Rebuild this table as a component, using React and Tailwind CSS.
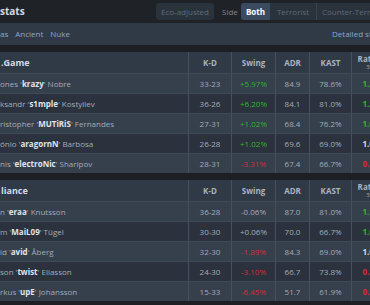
import React from "react";

const teams = [
  {
    name: ".Game",
    players: [
      { first: "ones", nick: "krazy", last: "Nobre", kd: "33-23", swing: "+5.97%", adr: "84.9", kast: "78.6%", rating: "1.24" },
      { first: "ksandr", nick: "s1mple", last: "Kostyliev", kd: "36-26", swing: "+6.20%", adr: "84.1", kast: "81.0%", rating: "1.22" },
      { first: "ristopher", nick: "MUTiRiS", last: "Fernandes", kd: "27-31", swing: "+1.02%", adr: "68.4", kast: "76.2%", rating: "1.05" },
      { first: "ónio", nick: "aragornN", last: "Barbosa", kd: "26-28", swing: "+1.02%", adr: "69.6", kast: "69.0%", rating: "1.00" },
      { first: "nis", nick: "electroNic", last: "Sharipov", kd: "28-31", swing: "-3.31%", adr: "67.4", kast: "66.7%", rating: "0.91" },
    ],
  },
  {
    name: "liance",
    players: [
      { first: "n", nick: "eraa", last: "Knutsson", kd: "36-28", swing: "-0.06%", adr: "87.0", kast: "81.0%", rating: "1.18" },
      { first: "m", nick: "MaiL09", last: "Tügel", kd: "30-30", swing: "+0.06%", adr: "70.0", kast: "66.7%", rating: "1.05" },
      { first: "id", nick: "avid", last: "Åberg", kd: "32-30", swing: "-1.89%", adr: "84.3", kast: "69.0%", rating: "1.00" },
      { first: "son", nick: "twist", last: "Eliasson", kd: "24-30", swing: "-3.10%", adr: "66.7", kast: "73.8%", rating: "0.89" },
      { first: "rkus", nick: "upE", last: "Johansson", kd: "15-33", swing: "-6.45%", adr: "51.7", kast: "61.9%", rating: "0.78" },
    ],
  },
];

const cols = "grid grid-cols-[188px_43px_44px_34px_42px_38px]";

function swingColor(s) {
  if (s === "-0.06%" || s === "+0.06%") return "text-[#a3acb7]";
  return s.startsWith("+") ? "text-[#2fb52a]" : "text-[#dc2b35]";
}

function ratingColor(r) {
  const v = parseFloat(r);
  if (v > 1.02) return "text-[#2fb52a]";
  if (v < 1) return "text-[#dc2b35]";
  return "text-[#d5dbe2]";
}

function Team({ team }) {
  return (
    <div className="w-[389px]">
      <div className={`${cols} h-[21px] bg-[#303946] text-[8px] font-bold text-[#a9b2bd]`}>
        <div className="flex items-center pl-[1px] text-[9px] text-[#d4dbe3]">{team.name}</div>
        <div className="flex items-center justify-center border-l border-[#465160]">K-D</div>
        <div className="flex items-center justify-center border-l border-[#465160]">Swing</div>
        <div className="flex items-center justify-center border-l border-[#465160]">ADR</div>
        <div className="flex items-center justify-center border-l border-[#465160]">KAST</div>
        <div className="flex flex-col items-center justify-center border-l border-[#465160] leading-[9px]">
          <span>Rating</span>
          <span className="text-[6px] font-normal">3.0</span>
        </div>
      </div>
      {team.players.map((p, i) => (
        <div
          key={p.nick}
          className={`${cols} h-[20px] border-t border-[#404a57] text-[8px] text-[#a3acb7] ${
            i % 2 === 0 ? "bg-[#363f4c]" : "bg-[#2b323d]"
          }`}
        >
          <div className="flex items-center whitespace-nowrap">
            {p.first} '<span className="font-bold text-[#dfe5ec]">{p.nick}</span>' {p.last}
          </div>
          <div className="flex items-center justify-center border-l border-[#465160]">{p.kd}</div>
          <div className={`flex items-center justify-center border-l border-[#465160] ${swingColor(p.swing)}`}>
            {p.swing}
          </div>
          <div className="flex items-center justify-center border-l border-[#465160]">{p.adr}</div>
          <div className="flex items-center justify-center border-l border-[#465160]">{p.kast}</div>
          <div className={`flex items-center justify-center border-l border-[#465160] font-bold ${ratingColor(p.rating)}`}>
            {p.rating}
          </div>
        </div>
      ))}
    </div>
  );
}

export default function App() {
  return (
    <div className="w-[370px] h-[305px] overflow-hidden bg-[#1c2025] font-['Open_Sans',sans-serif]">
      {/* top bar */}
      <div className="flex h-[23px] w-[420px] items-center bg-[#1f2328] whitespace-nowrap">
        <div className="w-[156px] shrink-0 text-[10px] font-bold text-[#d3d9e0]">stats</div>
        <div className="flex h-[17px] w-[58px] shrink-0 items-center rounded-[3px] bg-[#2a323c] pl-[5px] text-[8px] text-[#5f6b79]">
          Eco-adjusted
        </div>
        <div className="ml-[8px] w-[19px] shrink-0 text-[8px] text-[#7b8592]">Side</div>
        <div className="flex h-[17px] shrink-0 items-center rounded-l-[3px] bg-[#2a323c] text-[8px]">
          <div className="flex h-full w-[29px] items-center justify-center rounded-l-[3px] bg-[#3b4b5f] font-bold text-white">
            Both
          </div>
          <div className="flex h-full w-[46px] items-center justify-center text-[#5f6b79]">Terrorist</div>
          <div className="flex h-full items-center border-l border-[#3a4350] pl-[5px] pr-[10px] text-[#5f6b79]">
            Counter-Terrorist
          </div>
        </div>
      </div>
      {/* map filter */}
      <div className="flex h-[22px] items-center bg-[#303a47] text-[8px] text-[#8ea7c6] whitespace-nowrap">
        <div className="flex flex-1 gap-[7px]">
          <span>as</span>
          <span>Ancient</span>
          <span>Nuke</span>
        </div>
        <span className="w-[38px] shrink-0">Detailed stats</span>
      </div>
      <div className="h-[7px]" />
      <Team team={teams[0]} />
      <div className="h-[7px]" />
      <Team team={teams[1]} />
    </div>
  );
}
